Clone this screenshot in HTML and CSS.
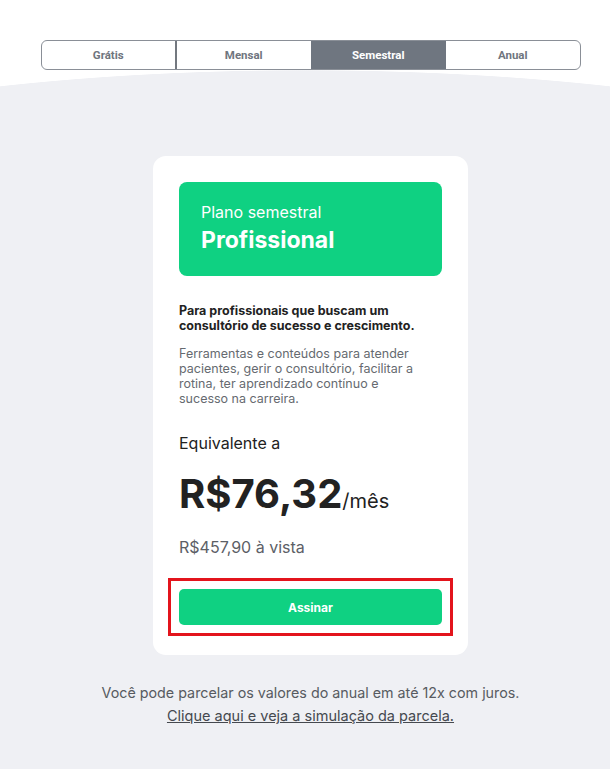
FILE: index.html
```html
<!DOCTYPE html>
<html lang="pt-BR">
<head>
<meta charset="utf-8">
<title>Planos</title>
<link rel="stylesheet" href="styles.css">
</head>
<body>
<div class="page">
  <nav class="tabs">
    <button class="tab tab-first">Grátis</button>
    <button class="tab">Mensal</button>
    <button class="tab tab-active">Semestral</button>
    <button class="tab">Anual</button>
  </nav>
  <main class="plans">
    <section class="card">
      <div class="card-head">
        <p class="plan-kind">Plano semestral</p>
        <h1 class="plan-name">Profissional</h1>
      </div>
      <p class="lead">Para profissionais que buscam um consultório de sucesso e crescimento.</p>
      <p class="desc">Ferramentas e conteúdos para atender pacientes, gerir o consultório, facilitar a rotina, ter aprendizado contínuo e sucesso na carreira.</p>
      <p class="equiv">Equivalente a</p>
      <p class="price"><span class="price-value">R$76,32</span><span class="price-unit">/mês</span></p>
      <p class="cash">R$457,90 à vista</p>
      <div class="cta">
        <button class="subscribe">Assinar</button>
      </div>
    </section>
    <p class="note">Você pode parcelar os valores do anual em até 12x com juros.</p>
    <p class="note-link"><a href="#">Clique aqui e veja a simulação da parcela.</a></p>
  </main>
</div>
</body>
</html>
```

FILE: styles.css
```css
* { box-sizing: border-box; }
html, body { margin: 0; padding: 0; }
body {
  background: #eff0f4;
  font-family: "Inter", "Noto Sans", sans-serif;
  color: #222;
  overflow: hidden;
}
.page {
  background: #fff;
  min-height: 769px;
  padding-top: 40px;
}
.tabs {
  display: grid;
  grid-template-columns: repeat(4, 1fr);
  width: 540px;
  height: 30px;
  margin: 0 0 0 41px;
  border: 1px solid #8a8f97;
  border-radius: 6px;
  overflow: hidden;
  background: #fff;
}
.tab {
  border: 0;
  background: transparent;
  font-family: "Roboto", "Liberation Sans", sans-serif;
  font-weight: 700;
  font-size: 11.5px;
  color: #6f757e;
  padding: 0;
  cursor: pointer;
}
.tab-first { border-right: 2px solid #73787f; }
.tab-active { background: #6f7680; color: #fff; }
.plans {
  padding: 86px 0 40px 11px;
  background:
    radial-gradient(700px 160px at 50% 160px, #eff0f4 99.6%, #fff 100%) top / 100% 160px no-repeat,
    linear-gradient(#eff0f4, #eff0f4) 0 160px / 100% 100% no-repeat;
  min-height: 699px;
}
.card {
  width: 315px;
  margin: 0 auto;
  background: #fff;
  border-radius: 13px;
  padding: 26px 26px 19px;
}
.card p, .card h1 { margin: 0; }
.card-head {
  background: #0fd182;
  border-radius: 8px;
  height: 94px;
  padding: 20px 22px 0;
  color: #fff;
}
.plan-kind {
  font-size: 16px;
  line-height: 20px;
  font-weight: 400;
}
.plan-name {
  font-size: 23px;
  line-height: 28px;
  font-weight: 700;
  margin-top: 4px !important;
}
.lead {
  margin-top: 27px !important;
  font-size: 12.5px;
  line-height: 15px;
  font-weight: 700;
  color: #222;
}
.desc {
  margin-top: 13px !important;
  max-width: 240px;
  font-size: 12.5px;
  line-height: 15px;
  color: #666a70;
}
.equiv {
  margin-top: 27px !important;
  font-size: 16px;
  line-height: 20px;
  color: #222;
}
.price {
  margin-top: 17px !important;
  line-height: 48px;
  color: #222;
}
.price-value {
  font-size: 40px;
  font-weight: 700;
}
.price-unit {
  font-size: 20px;
  font-weight: 400;
}
.cash {
  margin-top: 11px !important;
  font-size: 16px;
  line-height: 20px;
  color: #5c6066;
}
.cta {
  margin: 21px -11px 0;
  border: 3px solid #e3141c;
  padding: 8px;
}
.subscribe {
  display: block;
  width: 100%;
  height: 36px;
  border: 0;
  border-radius: 5px;
  background: #0fd182;
  color: #fff;
  font-family: "Inter", sans-serif;
  font-weight: 700;
  font-size: 12px;
}
.note {
  margin: 28px 0 0;
  text-align: center;
  font-size: 14.3px;
  line-height: 20px;
  color: #575b61;
}
.note-link {
  margin: 3px 0 0;
  text-align: center;
  font-size: 14.5px;
  line-height: 20px;
}
.note-link a {
  color: #45494f;
  text-decoration: underline;
}
```
